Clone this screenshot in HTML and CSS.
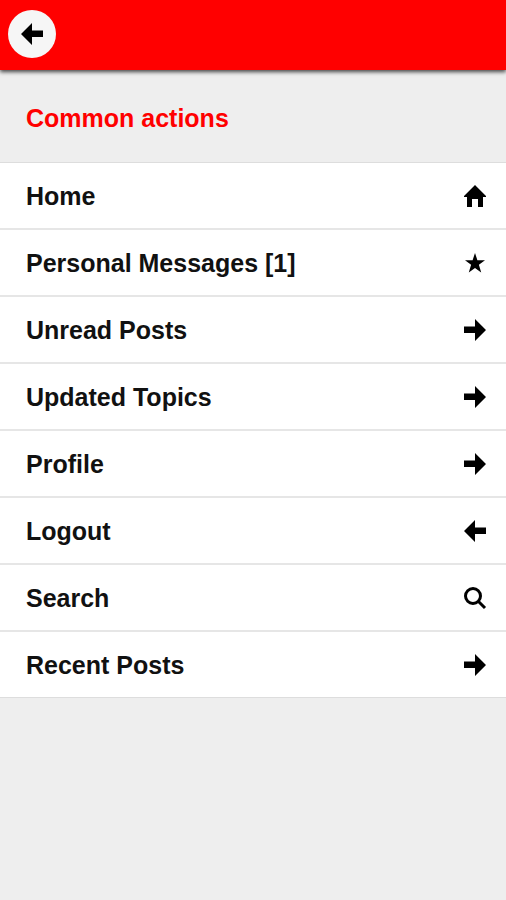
FILE: index.html
```html
<!DOCTYPE html>
<html lang="en">
<head>
<meta charset="utf-8">
<meta name="viewport" content="width=device-width, initial-scale=1">
<title>Common actions</title>
<link rel="stylesheet" href="styles.css">
</head>
<body>
<header class="bar">
  <button class="back" type="button" aria-label="Back">
    <svg class="icon" viewBox="0 0 24 24" aria-hidden="true"><path d="M1 12 12 1v7.500h11v6.500H12v8z"/></svg>
  </button>
</header>
<main>
  <h1 class="title">Common actions</h1>
  <nav class="menu">
    <a class="item" href="#">Home<svg class="icon" viewBox="0 0 24 24" aria-hidden="true"><path d="M12 1 1 12v1h3v10h5v-8h6v8h5V13h3v-1z"/></svg></a>
    <a class="item" href="#">Personal Messages [1]<svg class="icon" viewBox="0 0 24 24" aria-hidden="true"><path d="m12 2 2.400 7.200H22l-6.100 4.600 2.300 7.700-6.200-4.600-6.200 4.600 2.300-7.700L2 9.200h7.600z"/></svg></a>
    <a class="item" href="#">Unread Posts<svg class="icon" viewBox="0 0 24 24" aria-hidden="true"><path d="M23 12 12 1v7.500H1v6.500h11v8z"/></svg></a>
    <a class="item" href="#">Updated Topics<svg class="icon" viewBox="0 0 24 24" aria-hidden="true"><path d="M23 12 12 1v7.500H1v6.500h11v8z"/></svg></a>
    <a class="item" href="#">Profile<svg class="icon" viewBox="0 0 24 24" aria-hidden="true"><path d="M23 12 12 1v7.500H1v6.500h11v8z"/></svg></a>
    <a class="item" href="#">Logout<svg class="icon" viewBox="0 0 24 24" aria-hidden="true"><path d="M1 12 12 1v7.500h11v6.500H12v8z"/></svg></a>
    <a class="item" href="#">Search<svg class="icon" viewBox="0 0 24 24" aria-hidden="true"><circle class="line" cx="10" cy="10" r="7.500"/><path class="line" d="m15.500 15.500 6.500 6.500"/></svg></a>
    <a class="item" href="#">Recent Posts<svg class="icon" viewBox="0 0 24 24" aria-hidden="true"><path d="M23 12 12 1v7.500H1v6.500h11v8z"/></svg></a>
  </nav>
</main>
</body>
</html>
```

FILE: styles.css
```css
* { box-sizing: border-box; }
body {
  margin: 0;
  min-height: 100vh;
  background: #eee;
  color: #111;
  font: bold 25px/30px "Liberation Sans", Arial, sans-serif;
}
.bar {
  display: flex;
  padding: 10px 8px 12px;
  background: #f00;
  box-shadow: 0 2px 4px #444;
}
.back {
  display: flex;
  align-items: center;
  justify-content: center;
  width: 48px;
  height: 48px;
  padding: 0;
  border: 0;
  border-radius: 50%;
  background: #f6f6f6;
}
.icon {
  flex: none;
  width: 24px;
  height: 24px;
  fill: #000;
}
.line {
  fill: none;
  stroke: #000;
  stroke-width: 3;
}
.title {
  margin: 0;
  padding: 33px 26px 29px;
  color: #f00;
  font-size: 25px;
}
.menu {
  border-top: 1px solid #ddd;
  border-bottom: 1px solid #ddd;
}
.item {
  display: flex;
  align-items: center;
  justify-content: space-between;
  height: 67px;
  padding: 0 19px 0 26px;
  border-bottom: 2px solid #e6e6e6;
  background: #fff;
  color: #111;
  text-decoration: none;
}
.item:last-child {
  height: 65px;
  border-bottom: 0;
}
```
